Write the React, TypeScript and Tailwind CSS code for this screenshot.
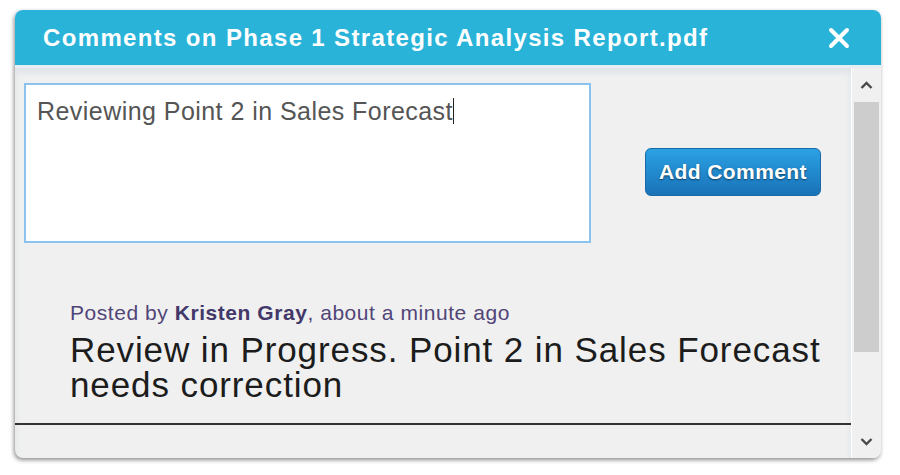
import React from 'react';

const ScrollBar: React.FC = () => (
  <div className="w-[30px] flex flex-col bg-[#f0f0f0] border-l border-white">
    <div className="h-[34px] flex items-center justify-center">
      <svg width="13" height="9" viewBox="0 0 13 9">
        <path d="M1.5 7 L6.5 2 L11.5 7" fill="none" stroke="#4a4a4a" strokeWidth="2.4" />
      </svg>
    </div>
    <div className="h-[250px] mx-[2px] bg-[#cdcdcd]"></div>
    <div className="flex-1"></div>
    <div className="h-[34px] flex items-center justify-center">
      <svg width="13" height="9" viewBox="0 0 13 9">
        <path d="M1.5 2 L6.5 7 L11.5 2" fill="none" stroke="#4a4a4a" strokeWidth="2.4" />
      </svg>
    </div>
  </div>
);

const App: React.FC = () => {
  return (
    <div className="w-[900px] h-[475px] bg-white pt-[10px] pl-[15px] font-[family-name:'Liberation_Sans',Arial,sans-serif]">
      <div className="w-[866px] h-[448px] flex flex-col rounded-[8px] bg-[#f0f0f0] shadow-[-1px_2px_4px_rgba(0,0,0,0.45)] overflow-hidden">
        <div className="h-[58px] shrink-0 bg-[#29b3d9] flex items-center justify-between pl-[28px] pr-[31px] border-b-[3px] border-[#e4eef3]">
          <h1 className="text-white font-bold text-[24px] tracking-[1.35px] leading-none">
            Comments on Phase 1 Strategic Analysis Report.pdf
          </h1>
          <svg width="22" height="22" viewBox="0 0 22 22">
            <path d="M3 3 L19 19 M19 3 L3 19" stroke="white" strokeWidth="4" strokeLinecap="round" />
          </svg>
        </div>
        <div className="flex-1 flex min-h-0">
          <div className="flex-1 flex flex-col shadow-[inset_0_4px_6px_rgba(180,200,215,0.35)]">
            <div className="flex items-start pt-[15px] pl-[9px]">
              <div className="w-[567px] h-[160px] bg-white border-2 border-[#8cc3ee] pl-[11px] pt-[14px] text-[25px] tracking-[0.45px] text-[#555] leading-none">
                Reviewing Point 2 in Sales Forecast<span className="inline-block w-px h-[26px] bg-[#222] align-top -mt-[1px]"></span>
              </div>
              <button className="ml-[54px] mt-[65px] w-[176px] h-[48px] rounded-[6px] border border-[#1a6aa8] bg-gradient-to-b from-[#2ba2e4] to-[#1a72b8] text-white font-bold text-[21px] tracking-[0.4px] [text-shadow:0_1px_2px_rgba(0,0,0,0.55)]">
                Add Comment
              </button>
            </div>
            <div className="pl-[55px] pt-[58px]">
              <p className="text-[21px] tracking-[0.55px] text-[#514578] leading-[24px]">
                Posted by <span className="font-bold text-[#43386a]">Kristen Gray</span>, about a minute ago
              </p>
              <p className="w-[770px] text-[35px] tracking-[0.9px] text-[#1c1c1c] leading-[35px] mt-[7px]">
                Review in Progress. Point 2 in Sales Forecast needs correction
              </p>
            </div>
            <div className="mt-[21px] h-[2px] bg-[#333]"></div>
          </div>
          <ScrollBar />
        </div>
      </div>
    </div>
  );
};

export default App;
